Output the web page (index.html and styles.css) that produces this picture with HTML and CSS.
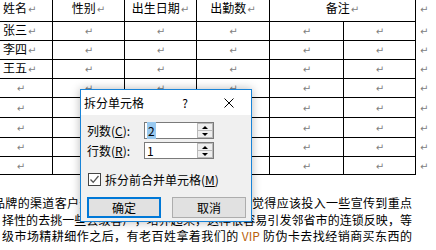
FILE: index.html
```html
<!DOCTYPE html>
<html lang="zh-cn">
<head>
    <meta charset="UTF-8">
    <title>拆分单元格</title>
    <link rel="stylesheet" href="styles.css">
</head>
<body>
    <!-- 表格 -->
    <table class="grid">
        <colgroup>
            <col class="w1"><col class="w2"><col class="w3"><col class="w4"><col class="w5"><col class="w6"><col class="w-end">
        </colgroup>
        <tr class="head">
            <td class="name">姓名<span class="pm">↵</span></td>
            <td>性别<span class="pm">↵</span></td>
            <td>出生日期<span class="pm">↵</span></td>
            <td>出勤数<span class="pm">↵</span></td>
            <td colspan="2">备注<span class="pm">↵</span></td>
            <td class="end"><span class="pm">↵</span></td>
        </tr>
        <tr class="row">
            <td class="name">张三<span class="pm">↵</span></td>
            <td><span class="pm">↵</span></td><td><span class="pm">↵</span></td><td><span class="pm">↵</span></td><td><span class="pm">↵</span></td><td><span class="pm">↵</span></td>
            <td class="end"><span class="pm">↵</span></td>
        </tr>
        <tr class="row">
            <td class="name">李四<span class="pm">↵</span></td>
            <td><span class="pm">↵</span></td><td><span class="pm">↵</span></td><td><span class="pm">↵</span></td><td><span class="pm">↵</span></td><td><span class="pm">↵</span></td>
            <td class="end"><span class="pm">↵</span></td>
        </tr>
        <tr class="row">
            <td class="name">王五<span class="pm">↵</span></td>
            <td><span class="pm">↵</span></td><td><span class="pm">↵</span></td><td><span class="pm">↵</span></td><td><span class="pm">↵</span></td><td><span class="pm">↵</span></td>
            <td class="end"><span class="pm">↵</span></td>
        </tr>
        <tr class="row">
            <td><span class="pm">↵</span></td><td><span class="pm">↵</span></td><td><span class="pm">↵</span></td><td><span class="pm">↵</span></td><td><span class="pm">↵</span></td><td><span class="pm">↵</span></td>
            <td class="end"><span class="pm">↵</span></td>
        </tr>
        <tr class="row tall">
            <td><span class="pm">↵</span></td><td><span class="pm">↵</span></td><td><span class="pm">↵</span></td><td><span class="pm">↵</span></td><td><span class="pm">↵</span></td><td><span class="pm">↵</span></td>
            <td class="end"><span class="pm">↵</span></td>
        </tr>
        <tr class="row tall">
            <td><span class="pm">↵</span></td><td><span class="pm">↵</span></td><td><span class="pm">↵</span></td><td><span class="pm">↵</span></td><td><span class="pm">↵</span></td><td><span class="pm">↵</span></td>
            <td class="end"><span class="pm">↵</span></td>
        </tr>
        <tr class="row">
            <td><span class="pm">↵</span></td><td><span class="pm">↵</span></td><td><span class="pm">↵</span></td><td><span class="pm">↵</span></td><td><span class="pm">↵</span></td><td><span class="pm">↵</span></td>
            <td class="end"><span class="pm">↵</span></td>
        </tr>
        <tr class="row short">
            <td><span class="pm">↵</span></td><td><span class="pm">↵</span></td><td><span class="pm">↵</span></td><td><span class="pm">↵</span></td><td><span class="pm">↵</span></td><td><span class="pm">↵</span></td>
            <td class="end"><span class="pm">↵</span></td>
        </tr>
    </table>

    <!-- 正文 -->
    <div class="para">
        <div class="line first">品牌的渠道客户开始主动找上门来，我们大家都觉得应该投入一些宣传到重点</div>
        <div class="line">择性的去挑一些县级客户，培养起来，这样很容易引发邻省市的连锁反映，等</div>
        <div class="line">级市场精耕细作之后，有老百姓拿着我们的 <span class="vip">VIP</span> 防伪卡去找经销商买东西的</div>
    </div>

    <!-- 对话框 -->
    <div class="dialog">
        <div class="titlebar">
            <span class="title">拆分单元格</span>
            <span class="help">?</span>
            <span class="close">
                <svg width="10" height="10" viewBox="0 0 10 10">
                    <path d="M0.5 0.5 L9.5 9.5 M9.5 0.5 L0.5 9.5" stroke="#000" stroke-width="1" fill="none"/>
                </svg>
            </span>
        </div>
        <div class="dlg-body">
            <div class="field-row">
                <span class="label">列数(<u>C</u>):</span>
                <div class="spin">
                    <span class="val"><span class="sel">2</span></span>
                    <div class="spin-btns"><span class="up"></span><span class="down"></span></div>
                </div>
            </div>
            <div class="field-row">
                <span class="label">行数(<u>R</u>):</span>
                <div class="spin">
                    <span class="val">1</span>
                    <div class="spin-btns"><span class="up"></span><span class="down"></span></div>
                </div>
            </div>
            <div class="check-row">
                <span class="box">
                    <svg width="11" height="11" viewBox="0 0 11 11">
                        <polyline points="1.5,5.5 4.2,8.3 9.5,2" stroke="#555" stroke-width="1.3" fill="none"/>
                    </svg>
                </span>
                <span>拆分前合并单元格(<u>M</u>)</span>
            </div>
            <div class="buttons">
                <button class="btn default">确定</button>
                <button class="btn">取消</button>
            </div>
        </div>
    </div>
</body>
</html>
```

FILE: styles.css
```css
body {
    margin: 0;
    background: #ffffff;
    font-family: "Noto Sans CJK SC", sans-serif;
    font-size: 12px;
    color: #000000;
    width: 436px;
    height: 250px;
    overflow: hidden;
    position: relative; /* para o diálogo */
}

/* tabela */
.grid {
    border-collapse: collapse;
    table-layout: fixed;
    margin: -4px 0 0 -12px;
}
.w1 { width: 64px; }
.w2 { width: 72px; }
.w3 { width: 72px; }
.w4 { width: 73px; }
.w5 { width: 74px; }
.w6 { width: 72px; }
.w-end { width: 20px; }
.grid td {
    border: 1px solid #000000;
    padding: 0;
    text-align: center;
    line-height: 14px;
    white-space: nowrap;
    overflow: hidden;
}
.grid td.name {
    text-align: left;
    padding-left: 14px;
}
.grid td.end {
    border: none;
    text-align: left;
    padding-left: 3px;
}
.head { height: 25px; }
.row { height: 19px; }
.row.tall { height: 20px; }
.row.short { height: 18px; }
.pm {
    font-family: "DejaVu Sans", sans-serif;
    font-size: 10px;
    color: #808080;
    margin-left: 1px;
}

/* texto */
.para {
    margin-top: 20px;
}
.line {
    width: 410px;
    margin-left: 2px;
    height: 16.5px;
    line-height: 16.5px;
    text-align: justify;
    text-align-last: justify;
}
.line.first {
    width: 419px;
    margin-left: -7px;
}
.vip {
    color: #b8620c;
}

/* diálogo */
.dialog {
    position: absolute;
    left: 80px;
    top: 89px;
    width: 170px;
    border: 1px solid #1883d7;
    background: #f0f0f0;
    box-shadow: 0 0 9px rgba(0, 0, 0, 0.28);
}
.titlebar {
    display: flex;
    align-items: center;
    height: 25px;
    background: #ffffff;
    padding-left: 3px;
}
.title {
    flex: 1;
    font-size: 12px;
}
.help {
    width: 10px;
    text-align: center;
    margin-right: 34px;
}
.close {
    width: 10px;
    height: 10px;
    margin-right: 17px;
    display: flex;
}
.dlg-body {
    padding: 7px 0 3px 6px;
    display: flex;
    flex-direction: column;
}
.field-row {
    display: flex;
    align-items: center;
    height: 17px;
    margin-bottom: 3px;
}
.label {
    width: 57px;
}
.spin {
    width: 70px;
    height: 17px;
    box-sizing: border-box;
    border: 1px solid #7a7a7a;
    background: #ffffff;
    display: flex;
}
.val {
    flex: 1;
    padding-left: 2px;
    line-height: 15px;
}
.sel {
    background: #99c9ef;
    padding: 0 1px;
}
.spin-btns {
    width: 16px;
    box-sizing: border-box;
    border: 1px solid #b9b9b9;
    background: #eeeeee;
    display: flex;
    flex-direction: column;
}
.spin-btns span {
    flex: 1;
    display: flex;
    align-items: center;
    justify-content: center;
}
.spin-btns .up {
    border-bottom: 1px solid #b9b9b9;
}
.spin-btns .up::before {
    content: "";
    border-left: 3px solid transparent;
    border-right: 3px solid transparent;
    border-bottom: 3px solid #000000;
}
.spin-btns .down::before {
    content: "";
    border-left: 3px solid transparent;
    border-right: 3px solid transparent;
    border-top: 3px solid #000000;
}
.check-row {
    display: flex;
    align-items: center;
    height: 13px;
    margin-top: 11px;
    padding-left: 1px;
}
.box {
    width: 13px;
    height: 13px;
    box-sizing: border-box;
    border: 1px solid #444444;
    background: #ffffff;
    margin-right: 4px;
    display: flex;
}
.buttons {
    display: flex;
    gap: 11px;
    margin-top: 11px;
}
.btn {
    width: 74px;
    height: 21px;
    box-sizing: border-box;
    border: 1px solid #adadad;
    background: #e1e1e1;
    font-family: "Noto Sans CJK SC", sans-serif;
    font-size: 12px;
    color: #000000;
    padding: 0;
}
.btn.default {
    border: 2px solid #0078d7;
}
```
